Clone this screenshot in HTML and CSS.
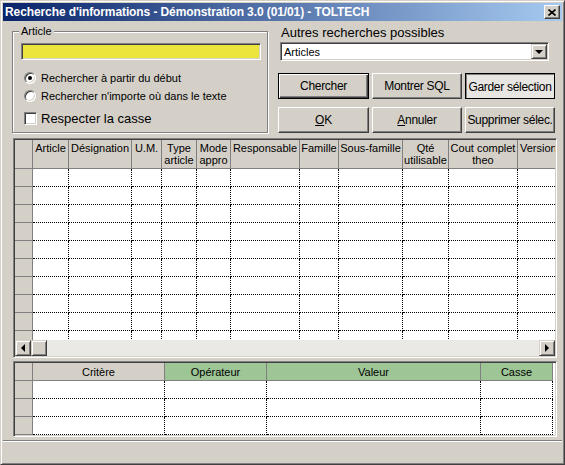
FILE: index.html
```html
<!DOCTYPE html>
<html>
<head>
    <title>Recherche d'informations</title>
    <link rel="stylesheet" href="styles.css">
</head>
<body>
    <div class="window">
        <div class="titlebar">
            <span class="title">Recherche d'informations - Démonstration 3.0 (01/01) - TOLTECH</span>
            <span class="close">
                <svg width="8" height="7" viewBox="0 0 8 7"><path d="M0.5 0.5 L7.5 6.5 M7.5 0.5 L0.5 6.5" stroke="#000" stroke-width="1.6" fill="none"/></svg>
            </span>
        </div>

        <div class="top">
            <!-- groupe Article -->
            <div class="group">
                <span class="group-label">Article</span>
                <div class="yellow-input"></div>
                <div class="opts">
                    <div class="opt"><span class="radio checked"></span>Rechercher à partir du début</div>
                    <div class="opt"><span class="radio"></span>Rechercher n'importe où dans le texte</div>
                    <div class="opt check"><span class="checkbox"></span>Respecter la casse</div>
                </div>
            </div>

            <div class="side">
                <div class="side-label">Autres recherches possibles</div>
                <div class="combo">
                    <span>Articles</span>
                    <span class="combo-btn"><span class="arrow-down"></span></span>
                </div>
                <div class="btn-row">
                    <button class="btn default first">Chercher</button>
                    <button class="btn">Montrer SQL</button>
                    <button class="btn pressed">Garder sélection</button>
                </div>
                <div class="btn-row second">
                    <button class="btn first"><u>O</u>K</button>
                    <button class="btn"><u>A</u>nnuler</button>
                    <button class="btn">Supprimer sélec.</button>
                </div>
            </div>
        </div>

        <!-- grille des résultats -->
        <div class="grid main-grid">
            <div class="table-wrap">
                <table class="results">
                    <colgroup>
                        <col style="width:18px"><col style="width:36px"><col style="width:63px"><col style="width:30px">
                        <col style="width:35px"><col style="width:34px"><col style="width:69px"><col style="width:39px">
                        <col style="width:64px"><col style="width:46px"><col style="width:69px"><col style="width:45px">
                    </colgroup>
                    <thead>
                        <tr>
                            <th></th><th>Article</th><th>Désignation</th><th>U.M.</th>
                            <th>Type<br>article</th><th>Mode<br>appro</th><th>Responsable</th><th>Famille</th>
                            <th>Sous-famille</th><th>Qté<br>utilisable</th><th>Cout complet<br>theo</th><th class="cut">Version</th>
                        </tr>
                    </thead>
                    <tbody id="result-rows"></tbody>
                </table>
            </div>
            <div class="hscroll">
                <span class="sbtn"><span class="arrow-left"></span></span>
                <span class="sbtn thumb"></span>
                <span class="track"></span>
                <span class="sbtn"><span class="arrow-right"></span></span>
            </div>
        </div>

        <!-- grille des critères -->
        <div class="grid crit-grid">
            <table class="criteria">
                <colgroup>
                    <col style="width:18px"><col style="width:132px"><col style="width:102px">
                    <col style="width:214px"><col style="width:72px">
                </colgroup>
                <thead>
                    <tr>
                        <th></th><th>Critère</th><th class="green">Opérateur</th>
                        <th class="green">Valeur</th><th class="green">Casse</th>
                    </tr>
                </thead>
                <tbody>
                    <tr><td class="rh"></td><td></td><td></td><td></td><td></td></tr>
                    <tr><td class="rh"></td><td></td><td></td><td></td><td></td></tr>
                    <tr><td class="rh"></td><td></td><td></td><td></td><td></td></tr>
                </tbody>
            </table>
        </div>

        <div class="status"></div>
    </div>

    <script>
        // lignes vides de la grille
        const body = document.getElementById('result-rows');
        for (let i = 0; i < 12; i++) {
            const tr = document.createElement('tr');
            let html = '<td class="rh"></td>';
            for (let c = 0; c < 11; c++) html += '<td></td>';
            tr.innerHTML = html;
            body.appendChild(tr);
        }
    </script>
</body>
</html>
```

FILE: styles.css
```css
* {
    box-sizing: border-box;
}
body {
    margin: 0;
    font-family: "Liberation Sans", Arial, sans-serif;
    font-size: 11px;
    color: #000;
}
.window {
    width: 565px;
    height: 465px;
    background: #d4d0c8;
    border: 1px solid;
    border-color: #d4d0c8 #404040 #404040 #d4d0c8;
    box-shadow: inset 1px 1px #fff, inset -1px -1px #808080;
    padding: 2px;
    display: flex;
    flex-direction: column;
}

/* barre de titre */
.titlebar {
    height: 18px;
    flex-shrink: 0;
    display: flex;
    align-items: center;
    justify-content: space-between;
    background: linear-gradient(to right, #0a246a, #a6caf0);
    color: #fff;
    font-weight: bold;
    font-size: 12px;
    letter-spacing: -0.1px;
    padding: 0 2px 0 2px;
}
.close {
    width: 16px;
    height: 14px;
    background: #d4d0c8;
    border: 1px solid;
    border-color: #fff #404040 #404040 #fff;
    box-shadow: inset -1px -1px #808080;
    display: flex;
    align-items: center;
    justify-content: center;
}

/* partie haute */
.top {
    display: flex;
    margin-top: 4px;
    flex-shrink: 0;
}
.group {
    position: relative;
    width: 256px;
    height: 102px;
    margin: 6px 0 0 9px;
    border: 1px solid #808080;
    box-shadow: inset 1px 1px #fff, 1px 1px #fff;
    padding: 11px 0 0 8px;
}
.group-label {
    position: absolute;
    top: -7px;
    left: 6px;
    padding: 0 2px;
    line-height: 13px;
    background: #d4d0c8;
}
.yellow-input {
    width: 240px;
    height: 17px;
    background: #ece53c;
    border: 1px solid;
    border-color: #808080 #fff #fff #808080;
    box-shadow: inset 1px 1px #404040, inset -1px -1px #d4d0c8;
}
.opts {
    margin-top: 9px;
}
.opt {
    display: flex;
    align-items: center;
    gap: 5px;
    height: 18px;
    padding-left: 3px;
}
.opt.check {
    height: 22px;
    margin-top: 2px;
    font-size: 13px;
    gap: 4px;
}
.radio {
    position: relative;
    width: 12px;
    height: 12px;
    border-radius: 50%;
    background: #fff;
    border: 1px solid;
    border-color: #808080 #fff #fff #808080;
    box-shadow: inset 1px 1px #404040, inset -1px -1px #d4d0c8;
}
.radio.checked::after {
    content: "";
    position: absolute;
    left: 3px;
    top: 3px;
    width: 4px;
    height: 4px;
    border-radius: 50%;
    background: #000;
}
.checkbox {
    width: 13px;
    height: 13px;
    background: #fff;
    border: 1px solid;
    border-color: #808080 #fff #fff #808080;
    box-shadow: inset 1px 1px #404040, inset -1px -1px #d4d0c8;
}

.side {
    margin-left: 10px;
    width: 278px;
}
.side-label {
    font-size: 13px;
    line-height: 15px;
    height: 17px;
    padding-left: 3px;
}
.combo {
    margin-left: 2px;
    width: 269px;
    height: 19px;
    background: #fff;
    border: 1px solid;
    border-color: #808080 #fff #fff #808080;
    box-shadow: inset 1px 1px #404040, inset -1px -1px #d4d0c8;
    display: flex;
    align-items: center;
    justify-content: space-between;
    padding: 1px 1px 1px 3px;
}
.combo-btn {
    width: 16px;
    height: 15px;
    background: #d4d0c8;
    border: 1px solid;
    border-color: #d4d0c8 #404040 #404040 #d4d0c8;
    box-shadow: inset 1px 1px #fff, inset -1px -1px #808080;
    display: flex;
    align-items: center;
    justify-content: center;
}
.arrow-down {
    border-left: 4px solid transparent;
    border-right: 4px solid transparent;
    border-top: 4px solid #000;
}
.btn-row {
    display: flex;
    gap: 3px;
    margin-top: 12px;
}
.btn-row.second {
    margin-top: 8px;
}
.btn {
    width: 90px;
    height: 26px;
    padding: 0;
    font-family: "Liberation Sans", Arial, sans-serif;
    font-size: 12px;
    letter-spacing: -0.3px;
    white-space: nowrap;
    color: #000;
    background: #d4d0c8;
    border: 1px solid;
    border-color: #fff #404040 #404040 #fff;
    box-shadow: inset -1px -1px #808080;
}
.btn.first {
    width: 91px;
}
.btn.default {
    border-color: #000;
    box-shadow: inset 1px 1px #fff, inset -1px -1px #404040, inset -2px -2px #808080;
}
.btn.pressed {
    border-color: #000;
    background: #e8e6e2;
    box-shadow: inset 1px 1px #808080;
    padding-top: 2px;
}

/* grilles */
.grid {
    margin-left: 10px;
    width: 544px;
    flex-shrink: 0;
    border: 1px solid;
    border-color: #808080 #fff #fff #808080;
    box-shadow: inset 1px 1px #404040, inset -1px -1px #d4d0c8;
    padding: 1px;
    background: #fff;
}
.main-grid {
    margin-top: 5px;
    height: 220px;
    display: flex;
    flex-direction: column;
}
.table-wrap {
    flex: 1;
    overflow: hidden;
}
table {
    border-collapse: separate;
    border-spacing: 0;
    table-layout: fixed;
}
.results {
    width: 548px;
}
th {
    font-weight: normal;
    background: #d4d0c8;
    border-right: 1px solid #808080;
    border-bottom: 1px solid #808080;
    padding: 0;
    white-space: nowrap;
    overflow: hidden;
}
.results thead tr {
    height: 29px;
}
.results th {
    vertical-align: top;
    padding-top: 2px;
    line-height: 12px;
}
.results th.cut {
    text-align: left;
    padding-left: 2px;
}
tbody tr {
    height: 18px;
}
td {
    padding: 0;
    border-right: 1px dotted #000;
    border-bottom: 1px dotted #000;
}
td.rh {
    background: #d4d0c8;
    border-right: 1px solid #808080;
    border-bottom: 1px solid #808080;
}
.hscroll {
    height: 16px;
    flex-shrink: 0;
    display: flex;
    background: #ebe9e5;
}
.track {
    flex: 1;
}
.sbtn {
    width: 16px;
    height: 16px;
    background: #d4d0c8;
    border: 1px solid;
    border-color: #d4d0c8 #404040 #404040 #d4d0c8;
    box-shadow: inset 1px 1px #fff, inset -1px -1px #808080;
    display: flex;
    align-items: center;
    justify-content: center;
}
.arrow-left {
    border-top: 4px solid transparent;
    border-bottom: 4px solid transparent;
    border-right: 4px solid #000;
}
.arrow-right {
    border-top: 4px solid transparent;
    border-bottom: 4px solid transparent;
    border-left: 4px solid #000;
}

.crit-grid {
    margin-top: 3px;
    height: 76px;
    overflow: hidden;
}
.criteria {
    width: 538px;
}
.criteria thead tr {
    height: 18px;
}
.criteria th.green {
    background: #9dc596;
}

.status {
    flex: 1;
    margin-top: 3px;
    border-top: 1px solid #808080;
    box-shadow: inset 0 1px #fff;
}
```
